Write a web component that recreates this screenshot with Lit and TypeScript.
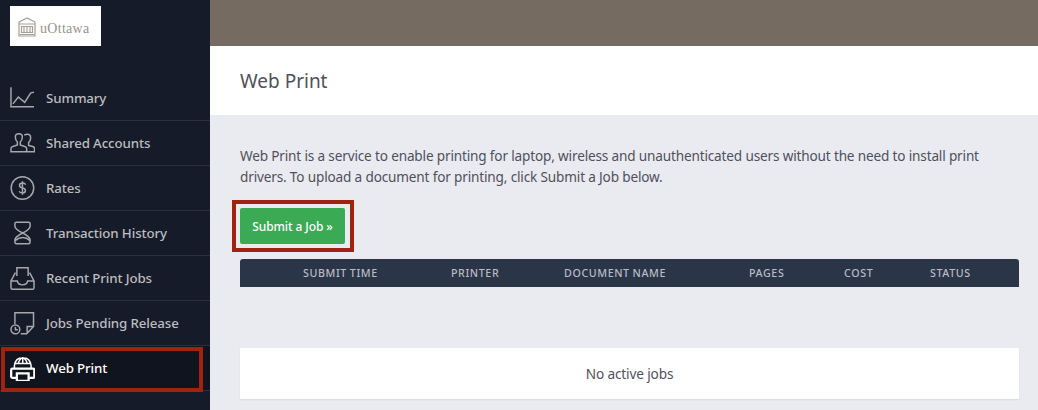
import { LitElement, html, css, svg } from "lit";
import { customElement } from "lit/decorators.js";

const icons: Record<string, unknown> = {
  summary: svg`<path d="M1 1V21H24.500M3 18L8.500 11L15 16.500L21 7L24.500 6"/>`,
  shared: svg`<path d="M1 21V17.500Q1 16 3 15.500L7.500 14V11Q5.500 9 5.500 6.500V5.500Q5.500 2.500 9 2.500Q12.500 2.500 12.500 5.500V6.500Q12.500 9 10.500 11V14L15 15.500Q17 16 17 17.500V21ZM14.500 4Q16 3 17.500 3Q21 3 21 6V7.500Q21 9.500 19 11.500V14.500L23 15.500Q25 16 25 17.500V21H17"/>`,
  rates: svg`<circle cx="12.700" cy="12" r="11.500"/><path d="M16 8.500Q15 7 12.700 7Q9.700 7 9.700 9.500Q9.700 11.500 12.700 12Q15.700 12.500 15.700 14.500Q15.700 17 12.700 17Q10 17 9.300 15.300M12.700 5V19"/>`,
  history: svg`<path d="M6.500 1H19Q20.500 1 20.500 2.500V5Q20.500 8 13 12Q5 8 5 5V2.500Q5 1 6.500 1ZM13 12Q20.500 16 20.500 19V20.500Q20.500 23 19 23H6.500Q5 23 5 20.500V19Q5 16 13 12ZM5.500 19.500Q9 16.500 13 16.500Q17 16.500 20 19.500"/>`,
  recent: svg`<path d="M7 10V1.500H18.500V10M5.500 6.500L1 15V22Q1 23.500 2.500 23.500H23Q24.500 23.500 24.500 22V15L20 6.500M1 15H7.500Q8 19 12.700 19Q17.500 19 18 15H24.500"/>`,
  pending: svg`<path d="M5 13V1.500H24V15.500L17 23H11M24 15.500H17.500V23"/><circle cx="5.500" cy="18.500" r="4.500"/><path d="M5.500 16V18.800H8"/>`,
  web: svg`<path stroke-width="1.500" d="M4.500 12V9.500Q5.500 1.500 13 1.500Q20.500 1.500 21.500 9.500V12M4.500 7.500H21.500M8.500 7.500Q9 3.500 13 1.500Q17 3.500 17.500 7.500M13 1.500V7.500"/><path stroke-width="2.300" d="M7 22H2.500Q1.200 22 1.200 21V14Q1.200 12.700 2.500 12.700H23.500Q24.800 12.700 24.800 14V21Q24.800 22 23.500 22H19M7 17.500H19V25H7Z"/>`,
};

const nav = [
  ["summary", "Summary"],
  ["shared", "Shared Accounts"],
  ["rates", "Rates"],
  ["history", "Transaction History"],
  ["recent", "Recent Print Jobs"],
  ["pending", "Jobs Pending Release"],
  ["web", "Web Print"],
];

const cols: [string, number][] = [
  ["SUBMIT TIME", 63],
  ["PRINTER", 211],
  ["DOCUMENT NAME", 324],
  ["PAGES", 509],
  ["COST", 604],
  ["STATUS", 690],
];

@customElement("app-root")
export class AppRoot extends LitElement {
  static styles = css`
    :host {
      display: block;
      width: 1038px;
      height: 410px;
      overflow: hidden;
      font-family: "Noto Sans", "Open Sans", sans-serif;
    }
    .page {
      display: grid;
      grid-template-columns: 210px 1fr;
      height: 410px;
      background: #eaebf0;
    }
    .side {
      background: #151b28;
      display: flex;
      flex-direction: column;
    }
    .logo {
      width: 91px;
      height: 40px;
      margin: 6px 0 30px 10px;
      background: #fff;
      display: flex;
      align-items: center;
      gap: 4px;
      padding: 2px 0 0 8px;
      box-sizing: border-box;
      color: #9a9188;
      font: 14px "Liberation Serif", serif;
      letter-spacing: 0.300px;
    }
    .logo svg { width: 18px; height: 20px; flex: none; }
    .logo span { padding-top: 4px; }
    .row {
      height: 45px;
      box-sizing: border-box;
      border-bottom: 1px solid #2c303c;
      display: flex;
      align-items: center;
      gap: 11px;
      padding-left: 10px;
      color: #bcbdc1;
      font-size: 13.300px;
      font-weight: 500;
      letter-spacing: -0.120px;
      position: relative;
    }
    .row svg {
      width: 25px;
      height: 25px;
      flex: none;
      fill: none;
      stroke: #a7a8ac;
      stroke-width: 1.500;
    }
    .row.active {
      color: #fff;
      background: #10141f;
    }
    .row.active svg { stroke: #fff; }
    .row.active::after {
      content: "";
      position: absolute;
      left: 1px;
      top: 1px;
      width: 202px;
      height: 45px;
      box-sizing: border-box;
      border: 4px solid #a02311;
    }
    .main { display: flex; flex-direction: column; min-width: 0; }
    .band { height: 46px; background: #756b60; }
    .head {
      height: 69px;
      background: #fff;
      display: flex;
      align-items: center;
      padding-left: 30px;
      box-sizing: border-box;
      color: #50505c;
      font-size: 19px;
      font-weight: 400;
    }
    .content { padding: 30px 19px 0 30px; }
    p {
      margin: 0;
      color: #50505c;
      font-size: 13.600px;
      line-height: 21px;
      letter-spacing: -0.165px;
    }
    .hl {
      width: fit-content;
      margin: 13px 0 0 -8px;
      padding: 4px 5px 4px 4px;
      border: 4px solid #a02311;
      display: flex;
    }
    .btn {
      width: 105px;
      height: 36px;
      background: #3aaa54;
      border-radius: 2px;
      color: #fff;
      font-size: 12px;
      font-weight: 500;
      letter-spacing: -0.100px;
      display: flex;
      align-items: center;
      justify-content: center;
    }
    .thead {
      margin-top: 7px;
      height: 28px;
      background: #2a3548;
      border-radius: 3px 3px 0 0;
      position: relative;
    }
    .thead span {
      position: absolute;
      top: 0;
      line-height: 28px;
      color: #b9bcc4;
      font-size: 10.700px;
      font-weight: 500;
      letter-spacing: 0.600px;
      word-spacing: -0.500px;
      white-space: nowrap;
    }
    .empty {
      margin-top: 61px;
      height: 51px;
      background: #fff;
      box-shadow: 0 1px 1px #dcdde2;
      display: flex;
      align-items: center;
      justify-content: center;
      color: #50505c;
      font-size: 13.600px;
      letter-spacing: -0.130px;
    }
  `;

  render() {
    return html`
      <div class="page">
        <aside class="side">
          <div class="logo">
            <svg viewBox="0 0 18 20" fill="none" stroke="#a79e94" stroke-width="1.200">
              <path d="M1 19V5L9 1L17 5V19ZM1 7H17M3.500 9.500H14.500V15.500H3.500ZM6 10V15M9 10V15M12 10V15M2 17.500H16"/>
            </svg>
            <span>uOttawa</span>
          </div>
          ${nav.map(
            ([icon, label]) => html`
              <div class="row ${icon === "web" ? "active" : ""}">
                <svg viewBox="0 0 25.500 25">${icons[icon]}</svg>
                <span>${label}</span>
              </div>
            `
          )}
        </aside>
        <main class="main">
          <div class="band"></div>
          <div class="head">Web Print</div>
          <div class="content">
            <p>
              Web Print is a service to enable printing for laptop, wireless and unauthenticated users without the need to install print<br />
              drivers. To upload a document for printing, click Submit a Job below.
            </p>
            <div class="hl"><div class="btn">Submit a Job »</div></div>
            <div class="thead">
              ${cols.map(([t, x]) => html`<span style="left:${x}px">${t}</span>`)}
            </div>
            <div class="empty">No active jobs</div>
          </div>
        </main>
      </div>
    `;
  }
}
